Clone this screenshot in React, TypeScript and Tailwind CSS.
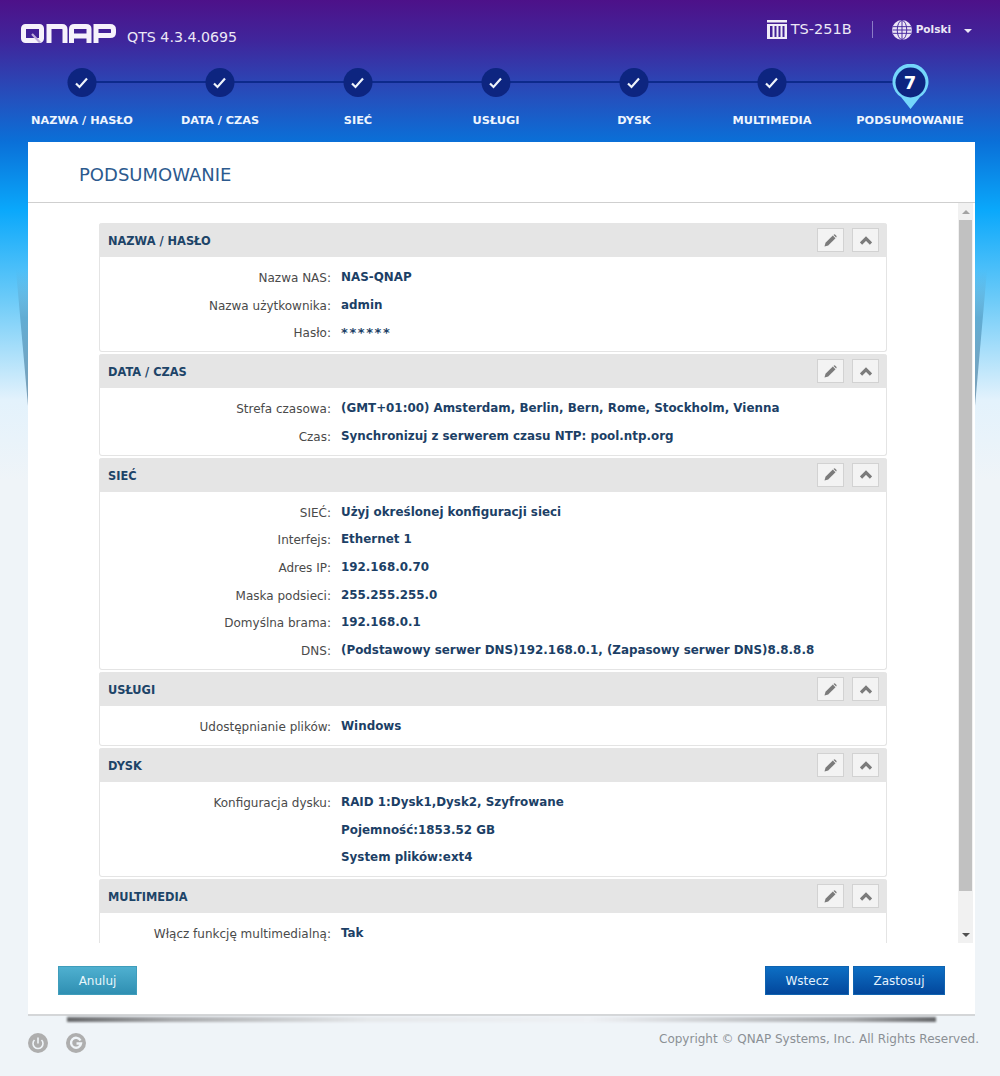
import React from "react";

const steps = ["NAZWA / HASŁO", "DATA / CZAS", "SIEĆ", "USŁUGI", "DYSK", "MULTIMEDIA", "PODSUMOWANIE"];

const sections: { title: string; rows: [string, string][] }[] = [
    {
        title: "NAZWA / HASŁO",
        rows: [
            ["Nazwa NAS:", "NAS-QNAP"],
            ["Nazwa użytkownika:", "admin"],
            ["Hasło:", "******"],
        ],
    },
    {
        title: "DATA / CZAS",
        rows: [
            ["Strefa czasowa:", "(GMT+01:00) Amsterdam, Berlin, Bern, Rome, Stockholm, Vienna"],
            ["Czas:", "Synchronizuj z serwerem czasu NTP: pool.ntp.org"],
        ],
    },
    {
        title: "SIEĆ",
        rows: [
            ["SIEĆ:", "Użyj określonej konfiguracji sieci"],
            ["Interfejs:", "Ethernet 1"],
            ["Adres IP:", "192.168.0.70"],
            ["Maska podsieci:", "255.255.255.0"],
            ["Domyślna brama:", "192.168.0.1"],
            ["DNS:", "(Podstawowy serwer DNS)192.168.0.1, (Zapasowy serwer DNS)8.8.8.8"],
        ],
    },
    {
        title: "USŁUGI",
        rows: [["Udostępnianie plików:", "Windows"]],
    },
    {
        title: "DYSK",
        rows: [
            ["Konfiguracja dysku:", "RAID 1:Dysk1,Dysk2, Szyfrowane"],
            ["", "Pojemność:1853.52 GB"],
            ["", "System plików:ext4"],
        ],
    },
    {
        title: "MULTIMEDIA",
        rows: [["Włącz funkcję multimedialną:", "Tak"]],
    },
];

const QnapLogo = () => (
    <svg width="95" height="19" viewBox="0 0 95 19" fill="none" stroke="#f6f2fb" strokeWidth="5">
        <rect x="2.500" y="2.500" width="18" height="14" rx="2" />
        <path d="M11 10 L19 18.500" strokeWidth="2.200" stroke="#bfaedb" />
        <path d="M28 19 V2.500 H41 Q44 2.500 44 5.500 V19" />
        <path d="M50.500 19 V5 Q50.500 2.500 53.500 2.500 H65 Q68 2.500 68 5 V19 M50.500 12 H68" />
        <path d="M75 19 V2.500 H89 Q92.500 2.500 92.500 5.500 V8.500 Q92.500 11.500 89 11.500 H75" />
    </svg>
);

const ModelIcon = () => (
    <svg width="20" height="19" viewBox="0 0 20 19" fill="#f1edf8">
        <rect x="0" y="0" width="20" height="2.500" />
        <path d="M0 4 H20 V19 H0 Z M3 6 V17 H5.500 V6 Z M7.500 6 V17 H9.500 V6 Z M11.500 6 V17 H13.500 V6 Z M15.500 6 V17 H17.500 V6 Z" fillRule="evenodd" />
    </svg>
);

const GlobeIcon = () => (
    <svg width="20" height="20" viewBox="0 0 21 21" fill="none">
        <circle cx="10.500" cy="10.500" r="10.500" fill="#ece5f6" />
        <g stroke="#43279d" strokeWidth="1">
            <path d="M1 7 H20 M0.500 10.500 H20.500 M1 14 H20 M10.500 0.500 V20.500" />
            <ellipse cx="10.500" cy="10.500" rx="5" ry="10" />
        </g>
    </svg>
);

const CheckStep = () => (
    <div className="relative z-10 flex h-[29px] w-[29px] -translate-x-[0.5px] items-center justify-center rounded-full bg-[#0d2580]">
        <svg width="14" height="12" viewBox="0 0 14 12" fill="none" stroke="#eef3fb" strokeWidth="2.200">
            <path d="M1.500 6.500 L5 10 L12.500 1.500" />
        </svg>
    </div>
);

const CurrentStep = () => (
    <div className="relative z-10 h-[29px] w-[29px]">
        <svg className="absolute left-[-4px] top-[-4px]" width="37" height="46" viewBox="0 0 37 46">
            <path d="M18.500 45 L9 33 A18 18 0 1 1 28 33 Z" fill="#74d6fb" />
            <circle cx="18.500" cy="18.500" r="15" fill="#0d2580" />
        </svg>
        <span className="absolute inset-0 flex items-center justify-center text-[18px] font-bold leading-none text-white">7</span>
    </div>
);

const PencilIcon = () => (
    <svg width="13" height="13" viewBox="0 0 13 13" fill="#7b7b7b">
        <path d="M0.500 12.500 L1.500 8.800 L8.800 1.500 L11.500 4.200 L4.200 11.500 Z" />
        <path d="M9.700 0.700 Q10.500 0 11.300 0.700 L12.300 1.700 Q13 2.500 12.300 3.300 L12.100 3.500 L9.500 0.900 Z" />
    </svg>
);

const ChevronIcon = () => (
    <svg width="12" height="9" viewBox="0 0 12 9" fill="none" stroke="#7b7b7b" strokeWidth="3.200">
        <path d="M1 7.500 L6 2.500 L11 7.500" />
    </svg>
);

const IconButton = ({ children }: { children: React.ReactNode }) => (
    <div className="flex h-[24px] w-[27px] items-center justify-center border border-[#d2d2d2] bg-[#f3f3f3]">
        {children}
    </div>
);

const Section = ({ title, rows }: { title: string; rows: [string, string][] }) => (
    <div className="w-[788px] rounded-[3px] border border-t-0 border-[#e4e4e4]">
        <div className="-mx-px flex h-[34px] items-center justify-between rounded-t-[3px] bg-[#e5e5e5] pl-[9px] pr-[8px]">
            <span className="pt-[3px] text-[11.4px] font-bold text-[#1d4468]">{title}</span>
            <div className="flex gap-[8px]">
                <IconButton><PencilIcon /></IconButton>
                <IconButton><ChevronIcon /></IconButton>
            </div>
        </div>
        <div className="pb-[4px] pt-[7px]">
            {rows.map(([label, value]) => (
                <div key={label + value} className="flex h-[27.7px] items-center text-[12px]">
                    <span className="w-[231px] text-right text-[#4a4a4a]">{label}</span>
                    <span className={value === "******" ? "ml-[10px] text-[13px] font-bold tracking-[1.6px] text-[#1c3f66]" : "ml-[10px] text-[11.9px] font-bold text-[#1c3f66]"}>{value}</span>
                </div>
            ))}
        </div>
    </div>
);

const Scrollbar = () => (
    <div className="flex h-full w-[15px] flex-col bg-[#f1f1f1]">
        <div className="flex h-[17px] items-center justify-center">
            <div className="h-0 w-0 border-x-[4px] border-b-[4px] border-x-transparent border-b-[#a3a3a3]" />
        </div>
        <div className="mx-px h-[671px] bg-[#c1c1c1]" />
        <div className="flex-1" />
        <div className="flex h-[17px] items-center justify-center">
            <div className="h-0 w-0 border-x-[4px] border-t-[4px] border-x-transparent border-t-[#505050]" />
        </div>
    </div>
);

const Wedge = ({ className, left }: { className: string; left: boolean }) => (
    <svg className={className} width="12" height="136" viewBox="0 0 12 136">
        <defs>
            <linearGradient id={left ? "wedgeL" : "wedgeR"} x1="0" y1="0" x2="0" y2="1">
                <stop offset="0" stopColor="#5da8cf" stopOpacity="0" />
                <stop offset="0.35" stopColor="#5da8cf" stopOpacity="0.9" />
                <stop offset="1" stopColor="#7d9db4" stopOpacity="1" />
            </linearGradient>
        </defs>
        <polygon points={left ? "0,0 12,0 12,136" : "12,0 0,0 0,136"} fill={`url(#${left ? "wedgeL" : "wedgeR"})`} />
    </svg>
);

export default function App() {
    return (
        <div className="relative flex h-[1076px] w-[1000px] flex-col overflow-hidden bg-[linear-gradient(180deg,#4d1189_0px,#40259b_40px,#2352bf_100px,#0a70d8_142px,#0aa8fb_210px,#6dcbf8_300px,#e3f2fc_400px,#eff4f8_480px)] font-['DejaVu_Sans',sans-serif]">
            <Wedge className="absolute left-[16px] top-[270px]" left />
            <Wedge className="absolute left-[975px] top-[270px]" left={false} />

            {/* top bar */}
            <div className="flex h-[60px] items-start justify-between pl-[21px] pr-[28px] text-[#ece8f6]">
                <div className="flex items-center pt-[20px]">
                    <QnapLogo />
                    <span className="ml-[11px] mt-[9px] text-[14.2px] leading-[17px]">QTS 4.3.4.0695</span>
                </div>
                <div className="flex items-center pt-[19px]">
                    <ModelIcon />
                    <span className="ml-[4px] text-[14.5px]">TS-251B</span>
                    <div className="ml-[20px] h-[17px] w-px bg-[#8b7cc6]" />
                    <div className="ml-[19px]"><GlobeIcon /></div>
                    <span className="ml-[4px] text-[10.5px] font-bold">Polski</span>
                    <div className="ml-[13px] mt-[2px] h-0 w-0 border-x-[4px] border-t-[4px] border-x-transparent border-t-[#ece8f6]" />
                </div>
            </div>

            {/* steps */}
            <div className="relative grid h-[82px] grid-cols-[repeat(7,138px)] pl-[13px] pt-[8px]">
                <div className="absolute left-[82px] top-[21px] h-[2px] w-[828px] bg-[#0d2a8c]" />
                {steps.map((step, i) => (
                    <div key={step} className="flex flex-col items-center">
                        {i === 6 ? <CurrentStep /> : <CheckStep />}
                        <span className="mt-[15px] whitespace-nowrap text-[11.3px] font-bold leading-[17px] text-[#eef5fd]">{step}</span>
                    </div>
                ))}
            </div>

            {/* card */}
            <div className="relative mx-[28px] flex h-[872px] w-[947px] flex-col bg-white">
                <div className="flex h-[61px] shrink-0 items-center border-b border-[#cfcfcf] pl-[51px] pt-[5px] text-[18px] text-[#2c5a8e]">
                    PODSUMOWANIE
                </div>
                <div className="flex h-[740px] shrink-0 justify-between pr-[2px]">
                    <div className="flex flex-1 flex-col gap-[2.200px] overflow-hidden pl-[71px] pt-[20px]">
                        {sections.map((s) => (
                            <div key={s.title} className="shrink-0">
                                <Section title={s.title} rows={s.rows} />
                            </div>
                        ))}
                    </div>
                    <Scrollbar />
                </div>
                <div className="flex flex-1 items-start justify-between pl-[30px] pr-[30px] pt-[23px]">
                    <button className="h-[29px] w-[79px] border border-[#3f9dbb] bg-[linear-gradient(180deg,#4fb0d0,#2f8fb2)] text-[12px] text-[#e8f6fb]">
                        Anuluj
                    </button>
                    <div className="flex gap-[4px]">
                        <button className="h-[29px] w-[84px] border border-[#0f63b0] bg-[linear-gradient(180deg,#0d6fc4,#03479c)] text-[12px] text-[#e4f2fd]">
                            Wstecz
                        </button>
                        <button className="h-[29px] w-[92px] border border-[#0f63b0] bg-[linear-gradient(180deg,#0d6fc4,#03479c)] text-[12px] text-[#e4f2fd]">
                            Zastosuj
                        </button>
                    </div>
                </div>
                <div className="absolute bottom-[-2px] left-0 h-[2px] w-full bg-[#d4d6d8]" />
                <div className="absolute bottom-[-8px] left-[39px] h-[5px] w-[869px] bg-[linear-gradient(90deg,#66686a,#a8aaac_12%,#e6e9eb_35%,#eef1f4_60%,#a8aaac_90%,#66686a)] blur-[1px]" />
            </div>

            {/* footer */}
            <div className="relative flex flex-1 items-start justify-between pl-[28px] pr-[21px] pt-[16px]">
                <div className="flex gap-[18px] pt-[3px]">
                    <svg width="20" height="20" viewBox="0 0 20 20" fill="none">
                        <circle cx="10" cy="10" r="10" fill="#aeaeae" />
                        <path d="M6.500 7 A5 5 0 1 0 13.500 7" stroke="#eff4f8" strokeWidth="1.600" />
                        <path d="M10 4.500 V10.500" stroke="#eff4f8" strokeWidth="1.600" />
                    </svg>
                    <svg width="20" height="20" viewBox="0 0 20 20" fill="none">
                        <circle cx="10" cy="10" r="10" fill="#aeaeae" />
                        <path d="M14.500 7.500 A5 5 0 1 0 15 10.500 H10.500" stroke="#eff4f8" strokeWidth="2.400" />
                    </svg>
                </div>
                <span className="text-[12px] text-[#8b9095]">Copyright © QNAP Systems, Inc. All Rights Reserved.</span>
            </div>
        </div>
    );
}
